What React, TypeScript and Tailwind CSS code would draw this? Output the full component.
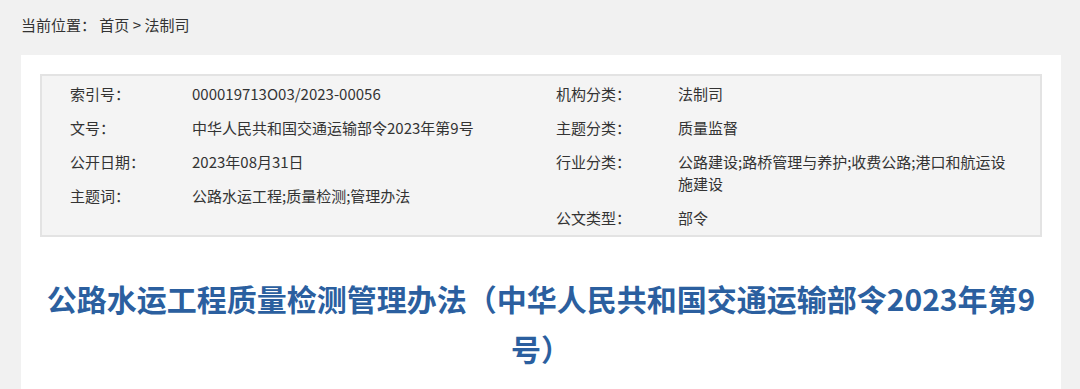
import React from "react";

type Row = { label: string; value: string };

const leftRows: Row[] = [
  { label: "索引号：", value: "000019713O03/2023-00056" },
  { label: "文号：", value: "中华人民共和国交通运输部令2023年第9号" },
  { label: "公开日期：", value: "2023年08月31日" },
  { label: "主题词：", value: "公路水运工程;质量检测;管理办法" },
];

const rightRows: Row[] = [
  { label: "机构分类：", value: "法制司" },
  { label: "主题分类：", value: "质量监督" },
  { label: "行业分类：", value: "公路建设;路桥管理与养护;收费公路;港口和航运设施建设" },
  { label: "公文类型：", value: "部令" },
];

const InfoRow = ({ item }: { item: Row }) => (
  <div className="flex py-[6px] leading-[22px]">
    <div className="w-[122px] shrink-0">{item.label}</div>
    <div className="w-[332px]">{item.value}</div>
  </div>
);

const App = () => {
  return (
    <div
      className="min-h-[389px] bg-[#f1f1f1] text-[#333] text-[15px]"
      style={{ fontFamily: '"Noto Sans CJK SC", "Noto Sans", sans-serif' }}
    >
      <div className="px-[21px] pt-[14px] pb-[19px] leading-[22px]">
        当前位置：&nbsp;首页 &gt; 法制司
      </div>
      <div className="mx-[21px] w-[1040px] bg-white px-[19px] pt-[19px] pb-[20px]">
        <div className="flex border-2 border-[#e3e3e3] bg-[#f4f4f4] pt-[1px] pb-[0px]">
          <div className="w-[486px] pl-[28px]">
            {leftRows.map((item) => (
              <InfoRow key={item.label} item={item} />
            ))}
          </div>
          <div className="flex-1 pl-[28px]">
            {rightRows.map((item) => (
              <InfoRow key={item.label} item={item} />
            ))}
          </div>
        </div>
        <h1 className="mt-[36px] text-center text-[30px] font-bold leading-[50px] text-[#2b5f9f]">
          公路水运工程质量检测管理办法（中华人民共和国交通运输部令2023年第9号）
        </h1>
      </div>
    </div>
  );
};

export default App;
